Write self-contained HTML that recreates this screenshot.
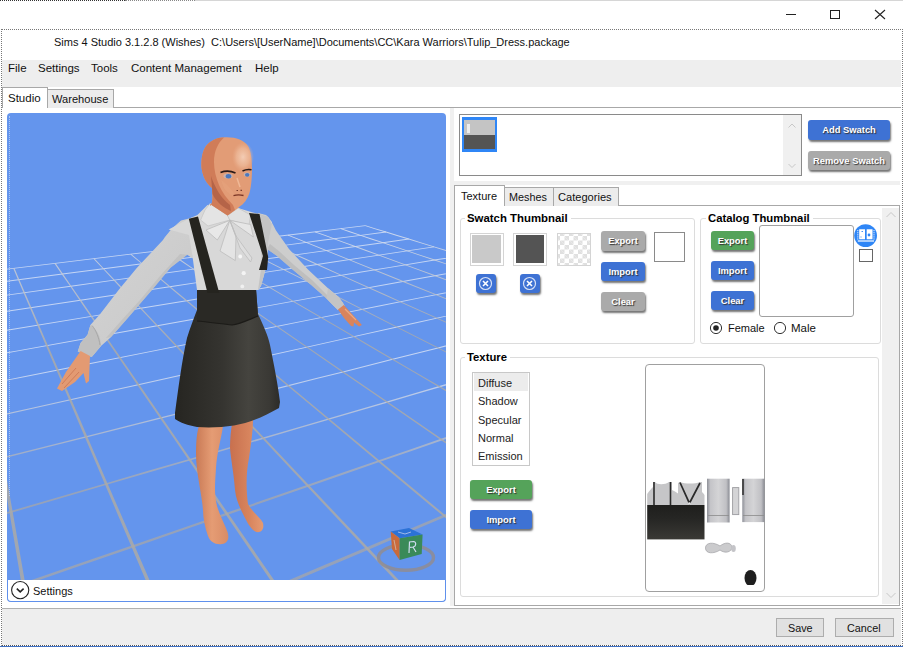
<!DOCTYPE html>
<html><head><meta charset="utf-8">
<style>
*{box-sizing:border-box;margin:0;padding:0}
html,body{width:903px;height:647px;overflow:hidden;background:#fff}
body{position:relative;font-family:"Liberation Sans",sans-serif;font-size:11.5px;color:#000}
.a{position:absolute}
.t{position:absolute;white-space:pre;line-height:1}
.btn3{position:absolute;border-radius:3px;color:#fff;font-weight:bold;text-align:center;font-size:9.4px;text-shadow:1px 1px 1px #333;box-shadow:1px 2px 2px rgba(0,0,0,.55)}
.blue{background:#3e72d4}
.grey{background:#aaaaaa}
.green{background:#55a35a}
</style></head><body>
<!-- top strip -->
<div class="a" style="left:0;top:0;width:125px;height:1px;border-top:1px dotted #333"></div>
<div class="a" style="left:125px;top:0;width:70px;height:1px;border-top:1px dotted #888"></div>
<div class="a" style="left:195px;top:0;width:708px;height:1px;background:#d6d6d6"></div>
<!-- window controls -->
<div class="a" style="left:786px;top:14px;width:10px;height:1px;background:#222"></div>
<div class="a" style="left:830px;top:10px;width:10px;height:9px;border:1px solid #222"></div>
<svg class="a" style="left:874px;top:9px" width="12" height="11"><path d="M1 1L11 10M11 1L1 10" stroke="#222" stroke-width="1.1" fill="none"/></svg>
<!-- outer dotted frame -->
<div class="a" style="left:1px;top:29px;width:902px;height:617px;border:1px dotted #777;border-bottom-color:#555"></div>
<div class="a" style="left:0;top:646px;width:903px;height:1px;background:#3d6fc4"></div>
<!-- title -->
<div class="t" style="left:54px;top:37px;font-size:11px;color:#111">Sims 4 Studio 3.1.2.8 (Wishes)  C:\Users\[UserName]\Documents\CC\Kara Warriors\Tulip_Dress.package</div>
<!-- menu bar -->
<div class="a" style="left:2px;top:60px;width:899px;height:27px;background:#eeeeee"></div>
<div class="t" style="left:8px;top:63px;color:#111">File</div>
<div class="t" style="left:38px;top:63px;color:#111">Settings</div>
<div class="t" style="left:91px;top:63px;color:#111">Tools</div>
<div class="t" style="left:131px;top:63px;color:#111">Content Management</div>
<div class="t" style="left:255px;top:63px;color:#111">Help</div>
<!-- main tabs -->
<div class="a" style="left:2px;top:107px;width:899px;height:1px;background:#a8a8a8"></div>
<div class="a" style="left:47px;top:89px;width:67px;height:19px;background:#ececec;border:1px solid #a8a8a8;border-bottom:none"></div>
<div class="t" style="left:52px;top:94px;color:#111;font-size:11.1px">Warehouse</div>
<div class="a" style="left:2px;top:87px;width:46px;height:21px;background:#fff;border:1px solid #a8a8a8;border-bottom:none"></div>
<div class="t" style="left:8px;top:93px;color:#111">Studio</div>

<!-- viewport -->
<div class="a" style="left:7px;top:113px;width:439px;height:489px;border-radius:4px;background:#6495ed;overflow:hidden">
<svg class="a" style="left:-7px;top:-113px" width="460" height="700">
<defs><linearGradient id="gA0" gradientUnits="userSpaceOnUse" x1="365" y1="226" x2="-53" y2="276"><stop offset="0.00" stop-color="#e4eaf6"/><stop offset="0.20" stop-color="#e4eaf6"/><stop offset="0.40" stop-color="#e4eaf6"/><stop offset="0.60" stop-color="#e4eaf6"/><stop offset="0.80" stop-color="#e4eaf6"/><stop offset="1.00" stop-color="#e4eaf6"/></linearGradient><linearGradient id="gA1" gradientUnits="userSpaceOnUse" x1="386" y1="232" x2="-52" y2="289"><stop offset="0.00" stop-color="#e4eaf6"/><stop offset="0.20" stop-color="#e4eaf6"/><stop offset="0.40" stop-color="#e4eaf6"/><stop offset="0.60" stop-color="#e4eaf6"/><stop offset="0.80" stop-color="#e4eaf6"/><stop offset="1.00" stop-color="#e4eaf6"/></linearGradient><linearGradient id="gA2" gradientUnits="userSpaceOnUse" x1="409" y1="239" x2="-52" y2="303"><stop offset="0.00" stop-color="#e4eaf6"/><stop offset="0.20" stop-color="#e4eaf6"/><stop offset="0.40" stop-color="#e4eaf6"/><stop offset="0.60" stop-color="#e4eaf6"/><stop offset="0.80" stop-color="#e4eaf6"/><stop offset="1.00" stop-color="#e4eaf6"/></linearGradient><linearGradient id="gA3" gradientUnits="userSpaceOnUse" x1="434" y1="247" x2="-51" y2="320"><stop offset="0.00" stop-color="#e4eaf6"/><stop offset="0.20" stop-color="#e4eaf6"/><stop offset="0.40" stop-color="#e4eaf6"/><stop offset="0.60" stop-color="#e4eaf6"/><stop offset="0.80" stop-color="#e4eaf6"/><stop offset="1.00" stop-color="#e4eaf6"/></linearGradient><linearGradient id="gA4" gradientUnits="userSpaceOnUse" x1="462" y1="256" x2="-50" y2="340"><stop offset="0.00" stop-color="#e4eaf6"/><stop offset="0.20" stop-color="#e4eaf6"/><stop offset="0.40" stop-color="#e4eaf6"/><stop offset="0.60" stop-color="#e4eaf6"/><stop offset="0.80" stop-color="#e4eaf6"/><stop offset="1.00" stop-color="#e4eaf6"/></linearGradient><linearGradient id="gA5" gradientUnits="userSpaceOnUse" x1="494" y1="265" x2="-49" y2="363"><stop offset="0.00" stop-color="#e4eaf6"/><stop offset="0.20" stop-color="#e4eaf6"/><stop offset="0.40" stop-color="#e4eaf6"/><stop offset="0.60" stop-color="#e4eaf6"/><stop offset="0.80" stop-color="#e4eaf6"/><stop offset="1.00" stop-color="#e4eaf6"/></linearGradient><linearGradient id="gA6" gradientUnits="userSpaceOnUse" x1="485" y1="285" x2="-48" y2="391"><stop offset="0.00" stop-color="#e4eaf6"/><stop offset="0.20" stop-color="#e4eaf6"/><stop offset="0.40" stop-color="#e4eaf6"/><stop offset="0.60" stop-color="#e4eaf6"/><stop offset="0.80" stop-color="#e4eaf6"/><stop offset="1.00" stop-color="#d8dde7"/></linearGradient><linearGradient id="gA7" gradientUnits="userSpaceOnUse" x1="491" y1="306" x2="-46" y2="426"><stop offset="0.00" stop-color="#e4eaf6"/><stop offset="0.20" stop-color="#e4eaf6"/><stop offset="0.40" stop-color="#e4eaf6"/><stop offset="0.60" stop-color="#e0e5f0"/><stop offset="0.80" stop-color="#d2d6df"/><stop offset="1.00" stop-color="#c5c7ce"/></linearGradient><linearGradient id="gA8" gradientUnits="userSpaceOnUse" x1="499" y1="332" x2="-44" y2="470"><stop offset="0.00" stop-color="#e4eaf6"/><stop offset="0.20" stop-color="#e4eaf6"/><stop offset="0.40" stop-color="#dadfea"/><stop offset="0.60" stop-color="#cbced6"/><stop offset="0.80" stop-color="#bbbdc3"/><stop offset="1.00" stop-color="#acacaf"/></linearGradient><linearGradient id="gA9" gradientUnits="userSpaceOnUse" x1="487" y1="373" x2="-42" y2="527"><stop offset="0.00" stop-color="#e2e8f4"/><stop offset="0.20" stop-color="#d1d5de"/><stop offset="0.40" stop-color="#c0c2c8"/><stop offset="0.60" stop-color="#aeafb2"/><stop offset="0.80" stop-color="#a6a6a8"/><stop offset="1.00" stop-color="#a6a6a8"/></linearGradient><linearGradient id="gA10" gradientUnits="userSpaceOnUse" x1="497" y1="420" x2="-106" y2="629"><stop offset="0.00" stop-color="#c8cbd2"/><stop offset="0.20" stop-color="#b0b1b5"/><stop offset="0.40" stop-color="#a6a6a8"/><stop offset="0.60" stop-color="#a6a6a8"/><stop offset="0.80" stop-color="#a6a6a8"/><stop offset="1.00" stop-color="#a6a6a8"/></linearGradient><linearGradient id="gA11" gradientUnits="userSpaceOnUse" x1="479" y1="501" x2="109" y2="658"><stop offset="0.00" stop-color="#a6a6a8"/><stop offset="0.20" stop-color="#a6a6a8"/><stop offset="0.40" stop-color="#a6a6a8"/><stop offset="0.60" stop-color="#a6a6a8"/><stop offset="0.80" stop-color="#a6a6a8"/><stop offset="1.00" stop-color="#a6a6a8"/></linearGradient><linearGradient id="gA12" gradientUnits="userSpaceOnUse" x1="493" y1="612" x2="401" y2="662"><stop offset="0.00" stop-color="#a6a6a8"/><stop offset="0.20" stop-color="#a6a6a8"/><stop offset="0.40" stop-color="#a6a6a8"/><stop offset="0.60" stop-color="#a6a6a8"/><stop offset="0.80" stop-color="#a6a6a8"/><stop offset="1.00" stop-color="#a6a6a8"/></linearGradient><linearGradient id="gB0" gradientUnits="userSpaceOnUse" x1="365" y1="226" x2="511" y2="271"><stop offset="0.00" stop-color="#dce2ee"/><stop offset="0.20" stop-color="#dce2ee"/><stop offset="0.40" stop-color="#d7dde7"/><stop offset="0.60" stop-color="#d3d7e0"/><stop offset="0.80" stop-color="#ced1d9"/><stop offset="1.00" stop-color="#c9ccd2"/></linearGradient><linearGradient id="gB1" gradientUnits="userSpaceOnUse" x1="341" y1="229" x2="500" y2="282"><stop offset="0.00" stop-color="#dce2ee"/><stop offset="0.20" stop-color="#dadfeb"/><stop offset="0.40" stop-color="#d4d9e2"/><stop offset="0.60" stop-color="#ced2d9"/><stop offset="0.80" stop-color="#c9cbd1"/><stop offset="1.00" stop-color="#c3c5c8"/></linearGradient><linearGradient id="gB2" gradientUnits="userSpaceOnUse" x1="315" y1="232" x2="508" y2="302"><stop offset="0.00" stop-color="#dce2ee"/><stop offset="0.20" stop-color="#d6dbe5"/><stop offset="0.40" stop-color="#cfd2da"/><stop offset="0.60" stop-color="#c7cacf"/><stop offset="0.80" stop-color="#c0c1c3"/><stop offset="1.00" stop-color="#b8b8b8"/></linearGradient><linearGradient id="gB3" gradientUnits="userSpaceOnUse" x1="288" y1="235" x2="518" y2="328"><stop offset="0.00" stop-color="#dce2ee"/><stop offset="0.20" stop-color="#d2d6df"/><stop offset="0.40" stop-color="#c8cbd0"/><stop offset="0.60" stop-color="#bebfc1"/><stop offset="0.80" stop-color="#b4b4b3"/><stop offset="1.00" stop-color="#acaaa6"/></linearGradient><linearGradient id="gB4" gradientUnits="userSpaceOnUse" x1="260" y1="239" x2="504" y2="348"><stop offset="0.00" stop-color="#dae0eb"/><stop offset="0.20" stop-color="#ced2da"/><stop offset="0.40" stop-color="#c3c4c8"/><stop offset="0.60" stop-color="#b7b7b7"/><stop offset="0.80" stop-color="#acaaa6"/><stop offset="1.00" stop-color="#acaaa6"/></linearGradient><linearGradient id="gB5" gradientUnits="userSpaceOnUse" x1="230" y1="242" x2="515" y2="387"><stop offset="0.00" stop-color="#d8dee8"/><stop offset="0.20" stop-color="#c9ccd1"/><stop offset="0.40" stop-color="#b9b9ba"/><stop offset="0.60" stop-color="#acaaa6"/><stop offset="0.80" stop-color="#acaaa6"/><stop offset="1.00" stop-color="#acaaa6"/></linearGradient><linearGradient id="gB6" gradientUnits="userSpaceOnUse" x1="199" y1="246" x2="531" y2="440"><stop offset="0.00" stop-color="#d6dbe5"/><stop offset="0.20" stop-color="#c1c3c6"/><stop offset="0.40" stop-color="#adaba7"/><stop offset="0.60" stop-color="#acaaa6"/><stop offset="0.80" stop-color="#acaaa6"/><stop offset="1.00" stop-color="#acaaa6"/></linearGradient><linearGradient id="gB7" gradientUnits="userSpaceOnUse" x1="166" y1="250" x2="511" y2="487"><stop offset="0.00" stop-color="#d4d9e2"/><stop offset="0.20" stop-color="#bbbbbc"/><stop offset="0.40" stop-color="#acaaa6"/><stop offset="0.60" stop-color="#acaaa6"/><stop offset="0.80" stop-color="#acaaa6"/><stop offset="1.00" stop-color="#acaaa6"/></linearGradient><linearGradient id="gB8" gradientUnits="userSpaceOnUse" x1="131" y1="254" x2="533" y2="590"><stop offset="0.00" stop-color="#d2d6df"/><stop offset="0.20" stop-color="#aeaca9"/><stop offset="0.40" stop-color="#acaaa6"/><stop offset="0.60" stop-color="#acaaa6"/><stop offset="0.80" stop-color="#acaaa6"/><stop offset="1.00" stop-color="#acaaa6"/></linearGradient><linearGradient id="gB9" gradientUnits="userSpaceOnUse" x1="94" y1="259" x2="503" y2="693"><stop offset="0.00" stop-color="#cfd3db"/><stop offset="0.20" stop-color="#acaaa6"/><stop offset="0.40" stop-color="#acaaa6"/><stop offset="0.60" stop-color="#acaaa6"/><stop offset="0.80" stop-color="#acaaa6"/><stop offset="1.00" stop-color="#acaaa6"/></linearGradient><linearGradient id="gB10" gradientUnits="userSpaceOnUse" x1="55" y1="263" x2="348" y2="691"><stop offset="0.00" stop-color="#cdd0d7"/><stop offset="0.20" stop-color="#acaaa6"/><stop offset="0.40" stop-color="#acaaa6"/><stop offset="0.60" stop-color="#acaaa6"/><stop offset="0.80" stop-color="#acaaa6"/><stop offset="1.00" stop-color="#acaaa6"/></linearGradient><linearGradient id="gB11" gradientUnits="userSpaceOnUse" x1="14" y1="268" x2="194" y2="689"><stop offset="0.00" stop-color="#cacdd3"/><stop offset="0.20" stop-color="#acaaa6"/><stop offset="0.40" stop-color="#acaaa6"/><stop offset="0.60" stop-color="#acaaa6"/><stop offset="0.80" stop-color="#acaaa6"/><stop offset="1.00" stop-color="#acaaa6"/></linearGradient><linearGradient id="gB12" gradientUnits="userSpaceOnUse" x1="-30" y1="274" x2="41" y2="687"><stop offset="0.00" stop-color="#c7cacf"/><stop offset="0.20" stop-color="#acaaa6"/><stop offset="0.40" stop-color="#acaaa6"/><stop offset="0.60" stop-color="#acaaa6"/><stop offset="0.80" stop-color="#acaaa6"/><stop offset="1.00" stop-color="#acaaa6"/></linearGradient></defs><polygon fill="url(#gA0)" opacity="0.75" points="365.3,225.2 340.7,228.2 301.6,233.0 273.9,236.3 244.9,239.9 214.3,243.6 165.5,249.5 130.7,253.7 93.9,258.2 55.0,262.9 -7.8,270.5 -52.9,276.0 -52.8,276.9 -7.7,271.4 55.1,263.8 94.0,259.1 130.8,254.6 165.6,250.4 214.4,244.5 245.0,240.8 274.0,237.2 301.7,233.9 340.8,229.1 365.4,226.1"/>
<polygon fill="url(#gA1)" opacity="0.75" points="385.9,231.6 360.6,234.9 320.2,240.1 291.6,243.9 261.4,247.8 229.7,251.9 178.6,258.5 142.1,263.3 103.4,268.3 62.4,273.6 -4.2,282.3 -52.3,288.5 -52.2,289.4 -4.1,283.2 62.5,274.5 103.5,269.2 142.2,264.2 178.7,259.4 229.8,252.8 261.6,248.7 291.7,244.8 320.4,241.0 360.7,235.8 386.1,232.5"/>
<polygon fill="url(#gA2)" opacity="0.75" points="408.7,238.6 382.7,242.3 341.0,248.1 311.3,252.2 280.0,256.6 246.8,261.2 193.4,268.7 155.0,274.0 114.2,279.7 70.7,285.8 -0.2,295.7 -51.7,302.9 -51.6,303.8 -0.1,296.6 70.8,286.7 114.3,280.6 155.1,274.9 193.5,269.6 246.9,262.1 280.1,257.5 311.4,253.1 341.1,249.0 382.8,243.2 408.9,239.5"/>
<polygon fill="url(#gA3)" opacity="0.75" points="434.0,246.4 407.1,250.5 364.1,257.0 333.3,261.6 300.7,266.5 266.1,271.7 210.1,280.2 169.7,286.3 126.5,292.8 80.3,299.8 4.4,311.2 -51.0,319.6 -50.9,320.5 4.6,312.1 80.4,300.7 126.6,293.7 169.8,287.2 210.2,281.1 266.3,272.6 300.8,267.4 333.4,262.5 364.2,257.8 407.3,251.3 434.1,247.3"/>
<polygon fill="url(#gA4)" opacity="0.75" points="462.1,255.1 434.5,259.6 390.0,266.9 358.1,272.1 324.2,277.7 288.0,283.6 229.2,293.3 186.5,300.3 140.7,307.8 91.3,315.9 9.9,329.3 -50.2,339.1 -50.0,340.0 10.0,330.2 91.5,316.8 140.8,308.7 186.6,301.2 229.3,294.2 288.2,284.5 324.3,278.6 358.2,273.0 390.2,267.8 434.6,260.5 462.2,256.0"/>
<polygon fill="url(#gA5)" opacity="0.75" points="493.6,264.8 465.2,269.9 419.3,278.1 386.2,284.1 350.9,290.4 313.1,297.2 251.2,308.4 205.9,316.5 157.1,325.3 104.3,334.8 16.3,350.7 -49.2,362.4 -49.0,363.3 16.4,351.5 104.4,335.7 157.3,326.2 206.1,317.4 251.3,309.3 313.2,298.1 351.0,291.3 386.4,285.0 419.5,279.0 465.4,270.8 493.8,265.6"/>
<polygon fill="url(#gA6)" opacity="0.75" points="484.8,284.5 452.7,290.9 418.4,297.8 381.6,305.1 342.0,313.0 299.3,321.5 253.2,330.6 203.2,340.6 148.7,351.4 89.2,363.3 24.0,376.3 -48.0,390.6 -47.8,391.5 24.1,377.2 89.4,364.2 148.9,352.3 203.3,341.5 253.4,331.5 299.5,322.3 342.2,313.8 381.7,306.0 418.5,298.6 452.9,291.8 484.9,285.4"/>
<polygon fill="url(#gA7)" opacity="0.75" points="491.0,305.6 455.5,313.6 417.2,322.1 396.9,326.6 353.7,336.2 306.9,346.7 255.7,358.1 199.7,370.5 138.1,384.2 105.0,391.6 33.3,407.5 -46.5,425.2 -46.2,426.4 33.6,408.6 105.2,392.6 138.4,385.2 199.9,371.4 255.9,358.9 307.1,347.5 353.9,337.1 397.1,327.5 417.4,323.0 455.7,314.4 491.2,306.5"/>
<polygon fill="url(#gA8)" opacity="0.75" points="498.9,332.0 459.1,342.0 437.8,347.4 392.5,358.8 342.9,371.4 316.2,378.1 258.9,392.5 227.9,400.4 160.9,417.3 85.9,436.2 45.0,446.5 -44.6,469.1 -44.3,470.5 45.4,447.8 86.2,437.5 161.2,418.5 228.2,401.5 259.2,393.7 316.5,379.1 343.1,372.4 392.8,359.8 438.1,348.4 459.3,343.0 499.1,332.9"/>
<polygon fill="url(#gA9)" opacity="0.75" points="486.8,372.2 463.6,379.0 413.7,393.5 386.7,401.4 358.3,409.7 296.6,427.7 263.0,437.4 189.4,458.9 149.1,470.6 106.1,483.2 10.8,511.0 -42.2,526.4 -41.7,528.3 11.3,512.8 106.6,484.8 149.6,472.3 189.9,460.4 263.4,438.9 297.0,429.1 358.7,411.0 387.1,402.7 414.1,394.8 464.0,380.2 487.2,373.4"/>
<polygon fill="url(#gA10)" opacity="0.75" points="496.8,419.5 469.8,428.8 410.9,449.2 378.7,460.3 344.3,472.1 307.7,484.8 226.5,512.8 181.3,528.4 132.6,545.2 80.0,563.3 -39.0,604.4 -106.7,627.7 -105.8,630.4 -38.1,606.9 80.9,565.6 133.4,547.4 182.0,530.5 227.2,514.9 308.3,486.7 345.0,474.0 379.3,462.1 411.5,450.9 470.4,430.5 497.4,421.1"/>
<polygon fill="url(#gA11)" opacity="0.75" points="478.6,500.0 444.0,514.6 406.8,530.3 366.7,547.3 323.3,565.6 276.3,585.5 225.1,607.1 169.2,630.7 107.9,656.6 109.3,659.9 170.6,633.8 226.4,610.0 277.5,588.3 324.5,568.3 367.8,549.9 407.8,532.8 445.0,517.0 479.6,502.3"/>
<polygon fill="url(#gA12)" opacity="0.75" points="491.9,609.8 448.1,633.6 400.0,659.8 402.1,663.7 450.1,637.3 493.8,613.2"/>
<polygon fill="url(#gB0)" opacity="0.85" points="365.2,226.1 375.3,229.2 385.9,232.5 397.0,235.9 408.7,239.5 421.0,243.3 433.9,247.3 447.6,251.5 462.0,255.9 477.3,260.6 493.5,265.6 510.8,270.9 511.0,270.1 493.8,264.8 477.6,259.8 462.3,255.1 447.9,250.6 434.2,246.4 421.2,242.4 408.9,238.6 397.2,235.1 386.1,231.6 375.5,228.4 365.4,225.3"/>
<polygon fill="url(#gB1)" opacity="0.85" points="340.6,229.1 350.3,232.4 360.5,235.8 371.3,239.4 382.6,243.1 394.5,247.1 420.4,255.8 434.4,260.5 449.3,265.4 465.2,270.7 482.0,276.4 500.0,282.4 500.3,281.5 482.3,275.5 465.4,269.9 449.6,264.6 434.7,259.6 420.6,254.9 394.8,246.3 382.9,242.3 371.6,238.5 360.8,234.9 350.6,231.5 340.9,228.3"/>
<polygon fill="url(#gB2)" opacity="0.85" points="314.8,232.2 324.1,235.6 344.3,243.0 355.1,247.0 366.6,251.2 378.7,255.6 405.2,265.3 419.6,270.5 435.0,276.2 451.4,282.1 487.7,295.4 507.8,302.8 508.1,301.9 488.0,294.6 451.7,281.3 435.3,275.3 419.9,269.7 405.5,264.4 379.0,254.7 366.9,250.3 355.4,246.1 344.6,242.2 324.4,234.8 315.1,231.4"/>
<polygon fill="url(#gB3)" opacity="0.85" points="287.8,235.5 296.7,239.1 315.8,246.8 326.2,251.0 348.8,260.1 361.1,265.1 388.1,275.9 402.9,281.9 435.7,295.1 453.9,302.5 494.7,318.9 517.6,328.1 517.9,327.3 495.0,318.1 454.3,301.6 436.1,294.3 403.3,281.1 388.4,275.1 361.5,264.2 349.1,259.3 326.6,250.2 316.2,246.0 297.0,238.2 288.1,234.7"/>
<polygon fill="url(#gB4)" opacity="0.85" points="259.4,238.9 276.6,246.7 285.9,250.8 306.1,259.9 317.1,264.9 341.3,275.7 354.5,281.7 383.9,294.9 400.2,302.2 436.6,318.6 457.1,327.8 503.5,348.7 503.9,347.8 457.5,327.0 437.0,317.8 400.6,301.4 384.3,294.1 354.9,280.9 341.6,274.9 317.5,264.1 306.5,259.1 286.3,250.0 277.0,245.8 259.8,238.1"/>
<polygon fill="url(#gB5)" opacity="0.85" points="229.6,242.5 245.6,250.7 254.3,255.1 273.2,264.7 294.5,275.5 318.8,287.8 332.2,294.6 362.0,309.8 396.8,327.5 437.8,348.3 461.1,360.2 515.1,387.6 515.6,386.7 461.5,359.3 438.2,347.5 397.2,326.7 362.4,309.0 332.6,293.8 319.2,287.0 294.9,274.7 273.6,263.9 254.7,254.3 246.0,249.9 230.0,241.7"/>
<polygon fill="url(#gB6)" opacity="0.85" points="198.3,246.3 212.9,254.9 229.4,264.5 247.9,275.3 268.9,287.6 293.0,301.7 306.4,309.5 336.6,327.1 372.1,347.9 414.6,372.8 466.4,403.1 530.8,440.8 531.5,439.7 467.0,402.1 415.2,371.9 372.6,347.1 337.1,326.3 306.9,308.7 293.5,300.9 269.4,286.8 248.3,274.5 229.8,263.7 213.4,254.1 198.7,245.6"/>
<polygon fill="url(#gB7)" opacity="0.85" points="165.3,250.3 178.4,259.4 193.2,269.5 209.9,281.0 229.0,294.1 251.0,309.2 276.5,326.8 306.6,347.6 342.7,372.4 386.5,402.6 441.1,440.2 510.8,488.2 511.8,486.8 441.9,438.9 387.3,401.5 343.4,371.4 307.3,346.7 277.1,326.0 251.5,308.4 229.5,293.4 210.4,280.3 193.7,268.8 178.9,258.6 165.8,249.6"/>
<polygon fill="url(#gB8)" opacity="0.85" points="130.4,254.5 141.9,264.1 154.8,274.8 177.5,293.9 195.6,309.0 216.6,326.5 241.3,347.2 270.9,371.9 306.9,402.1 378.4,461.9 443.8,516.6 532.2,590.5 533.7,588.7 445.1,515.0 379.5,460.5 307.9,400.9 271.8,370.9 242.1,346.2 217.3,325.6 196.3,308.1 178.2,293.1 155.4,274.1 142.5,263.4 131.0,253.8"/>
<polygon fill="url(#gB9)" opacity="0.85" points="93.6,259.0 103.1,269.1 119.8,286.9 133.0,300.9 148.2,317.1 166.0,336.1 199.3,371.5 227.4,401.5 262.5,438.8 307.2,486.5 403.6,589.2 501.8,693.9 504.3,691.5 405.6,587.3 308.8,485.0 263.9,437.5 228.7,400.3 200.4,370.4 167.0,335.1 149.1,316.2 133.8,300.1 120.6,286.1 103.8,268.4 94.3,258.3"/>
<polygon fill="url(#gB10)" opacity="0.85" points="54.6,263.7 61.9,274.4 70.3,286.6 85.1,308.4 97.0,325.8 111.0,346.4 127.8,371.0 148.2,400.9 173.6,438.1 225.7,514.6 275.6,587.8 346.6,691.8 349.7,689.7 278.2,586.0 227.9,513.1 175.4,436.9 149.8,399.8 129.3,370.0 112.4,345.5 98.2,325.0 86.2,307.6 71.3,285.9 62.9,273.8 55.5,263.1"/>
<polygon fill="url(#gB11)" opacity="0.85" points="13.3,268.6 18.1,280.0 23.6,293.0 30.0,308.0 37.4,325.4 46.1,345.9 62.6,384.6 76.6,417.7 94.4,459.4 117.3,513.4 148.3,586.2 192.2,689.6 196.1,688.0 151.5,584.8 120.0,512.3 96.7,458.4 78.8,416.8 64.5,383.8 47.8,345.2 38.9,324.8 31.4,307.4 24.9,292.5 19.3,279.5 14.4,268.1"/>
<polygon fill="url(#gB12)" opacity="0.85" points="-30.6,273.8 -28.6,285.9 -26.2,299.8 -23.5,315.9 -20.4,334.7 -16.6,357.0 -12.1,383.9 -6.6,416.9 0.4,458.4 9.4,512.1 21.6,584.5 38.9,687.2 43.3,686.5 25.3,583.9 12.6,511.6 3.1,457.9 -4.1,416.5 -9.9,383.5 -14.6,356.7 -18.6,334.4 -21.9,315.6 -24.7,299.6 -27.1,285.7 -29.3,273.6"/>
<defs>
<radialGradient id="hl"><stop offset="0" stop-color="#f4cfb8" stop-opacity=".95"/><stop offset="0.6" stop-color="#f0c0a2" stop-opacity=".6"/><stop offset="1" stop-color="#e9ad8c" stop-opacity="0"/></radialGradient>
<radialGradient id="hg" cx="238" cy="150" r="26" gradientUnits="userSpaceOnUse"><stop offset="0" stop-color="#f0c2a6"/><stop offset="0.6" stop-color="#e9a887"/><stop offset="1" stop-color="#e19a76"/></radialGradient>
<linearGradient id="sk" x1="175" y1="0" x2="280" y2="0" gradientUnits="userSpaceOnUse"><stop offset="0" stop-color="#262521"/><stop offset="0.45" stop-color="#353430"/><stop offset="0.7" stop-color="#45443f"/><stop offset="0.9" stop-color="#3a3935"/><stop offset="1" stop-color="#2c2b28"/></linearGradient>
<linearGradient id="lg1" x1="196" y1="0" x2="228" y2="0" gradientUnits="userSpaceOnUse"><stop offset="0" stop-color="#c97a56"/><stop offset="0.5" stop-color="#e59c74"/><stop offset="1" stop-color="#d98c66"/></linearGradient>
<linearGradient id="lg2" x1="230" y1="0" x2="263" y2="0" gradientUnits="userSpaceOnUse"><stop offset="0" stop-color="#c8704e"/><stop offset="0.6" stop-color="#d8855e"/><stop offset="1" stop-color="#e59a72"/></linearGradient>
<linearGradient id="arm1" x1="0" y1="0" x2="1" y2="1"><stop offset="0" stop-color="#d4d4d4"/><stop offset="1" stop-color="#c8c8c8"/></linearGradient>
</defs>
<g id="char">
<!-- left arm sleeve -->
<path d="M192 217.8 L181 220.6 C172 228 168 233 163 240 L137 267.8 L118.6 290 L100 314.2 L90.4 324.9 L87.6 334.7 L80.6 343 L77.8 351.4 L91.7 357 L101 346 L111.1 337 L127.8 318 L151.9 290 L170.5 267.8 L187.2 254.8 L192.8 258.6 Z" fill="url(#arm1)"/>
<path d="M111.1 337 L127.8 318 L151.9 290 L170.5 267.8 L187.2 254.8 L180 254 L160 276 L140 300 L120 322 L106 338 Z" fill="#bababa" opacity=".6"/>
<path d="M90.4 324.9 C96 328 101 336 101 346 L91.7 357 L77.8 351.4 L80.6 343 L87.6 334.7 Z" fill="#c0c0c0"/>
<path d="M92 325.5 C96 330 99 338 100 345" stroke="#a8a8a8" stroke-width="1" fill="none"/>
<!-- right arm sleeve -->
<path d="M258 213 L266 215 C269 217 272 222 276 230.5 L289 249 L308 269.6 L328 288.3 L338.4 296.8 L343 303 L344.5 306 L338 310 L333 305.3 L326.5 298.5 L311.2 284.9 L292.5 269.6 L277 256 L267 249 Z" fill="#cdcdcd"/>
<path d="M267 249 L277 256 L292.5 269.6 L311.2 284.9 L326.5 298.5 L333 305.3 L330 298 L312 280 L294 265 L280 252 L270 244 Z" fill="#b4b4b4" opacity=".6"/>
<path d="M328 288.3 L338.4 296.8 L343 303 L344.5 306 L338 310 L333 305.3 L326.5 298.5 Z" fill="#c4c4c4"/>
<!-- legs -->
<path d="M199 426 L223 426 C221 440 217 452 216 468 C215 484 214 494 217 506 C220 516 225 525 227.5 532 C229.5 538 228 543 222 544 C216 545 210 542 208 536 C205 528 203 518 203 510 C202 495 196 472 196 454 C196 440 197 432 199 426 Z" fill="url(#lg1)"/>
<path d="M232 424 L253 419 C253 430 251 445 249 458 C246 472 246 490 248 504 C252 512 260 517 263 523 C264.5 529 261 533 256.5 532 C251 530 247 522 244 516 C240 508 236 500 235 490 C234 475 231 460 230 448 C230 438 231 430 232 424 Z" fill="url(#lg2)"/>
<!-- skirt -->
<path d="M197 289 L256 289 L258 314 C263 325 268 335 270 345 C274 365 278 385 280 402 L279 408 C265 416 250 423 234 425.5 C222 427.5 208 428 197 427 C188 425.5 180 422.5 175 419 L175 413 C178 390 182 360 187 338 C190 328 194 318 197 310 Z" fill="url(#sk)"/>
<path d="M197 289 L256 289 L258 316 C248 320 240 324 232 325 C222 324 208 322 197 321 Z" fill="#2a2925"/>
<path d="M197 321 C208 322 222 324 232 325 C240 324 248 320 258 316" stroke="#1c1b18" stroke-width="1.2" fill="none"/>
<!-- torso shirt -->
<path d="M207.5 205 L238 208 L252 212.3 L263.6 215.1 L272 222 L268 244 L267 264 L261 286 L258 290 L197 290 L192.8 258.6 L189 235 L168.6 229.5 L188.8 218.7 L197.4 215.1 Z" fill="#d8d8d8"/>
<path d="M258 213 L268 217 L272 224 L268 244 L267 264 L261 286 L258 290 L262 262 Z" fill="#c4c4c4"/>
<path d="M210 203.5 L227.6 215.5 L229.8 220 L208 226 L200.6 220 L205 210 Z" fill="#e4e4e4" stroke="#c4c4c4" stroke-width=".7"/>
<path d="M238 208 L227.6 215.5 L229.8 220 L249 225 L250.6 215 Z" fill="#e0e0e0" stroke="#c4c4c4" stroke-width=".7"/>
<!-- bow -->
<path d="M229.8 220.3 L206 230 L217.3 240 Z" fill="#e8e8e8" stroke="#bdbdbd" stroke-width=".8"/>
<path d="M229.8 220.3 L250.6 224.5 L253.4 237 Z" fill="#e6e6e6" stroke="#bdbdbd" stroke-width=".8"/>
<path d="M229.8 220.3 L220 251 L235.3 260.6 L236 236 Z" fill="#e4e4e4" stroke="#bcbcbc" stroke-width=".8"/>
<path d="M229.8 220.3 L236 236 L252 258 L250.6 262 L240 248 Z" fill="#dedede" stroke="#bcbcbc" stroke-width=".8"/>
<circle cx="240.2" cy="256.5" r="1.9" fill="#f6f6f6"/><circle cx="243.7" cy="273.2" r="2.1" fill="#f4f4f4"/><circle cx="242.3" cy="286.4" r="1.9" fill="#f0f0f0"/>
<!-- suspenders -->
<path d="M188.8 218.7 L198 216.5 L219.3 293 L207.5 293 Z" fill="#25241f"/>
<path d="M249 213 L259.5 214 L268.2 257 L267 270 L259 270 L263 256 Z" fill="#25241f"/>
<!-- neck & head -->
<path d="M226 137.2 C236 137 244 140 248 146 C251 151 252 160 252 168 C252 176 251.5 186 249.5 193 C247.5 199 244 204 239 207 L237.5 208.5 L227.6 215.5 L210 204 L210.6 206 C212.5 202 213 200 212 188 C207 184 203 178 201.5 168 C201 160 202 152 206 146 C211 140 218 137 226 137.2 Z" fill="#e29c76"/>
<path d="M206 146 C211 140 218 137 224 137.5 C218 143 214 151 214 162 C214 170 216 178 219 185 C222 192 227 199 233 205 L235 210 L227.6 215.5 L210 204 L210.6 206 C212.5 202 213 200 212 188 C207 184 203 178 201.5 168 C201 160 202 152 206 146 Z" fill="#d07c58"/>
<ellipse cx="243" cy="157" rx="11" ry="15" fill="url(#hl)"/>
<path d="M211 176 C215 188 221 198 230 205 L231 211 C224 208 216 202 212.5 194 Z" fill="#b06045" opacity=".85"/>
<path d="M221 180 C226 183 232 190 236 196 C232 197 228 193 224 188 Z" fill="#e6a27c" opacity=".7"/>
<ellipse cx="228" cy="176" rx="4.6" ry="2.5" fill="#c7b2ae"/>
<ellipse cx="228.5" cy="176.3" rx="2.8" ry="2.2" fill="#4c78bc"/>
<ellipse cx="247" cy="174.6" rx="3.2" ry="2.1" fill="#c7b2ae"/>
<ellipse cx="247.2" cy="174.8" rx="2.2" ry="1.9" fill="#4c78bc"/>
<path d="M220.5 172.5 Q228 169.5 235.5 173" stroke="#2a1a18" stroke-width="1.6" fill="none"/>
<path d="M242.5 171 Q247 168.8 251.5 169.8" stroke="#2a1a18" stroke-width="1.5" fill="none"/>
<path d="M237 178 L240 187" stroke="#f0b896" stroke-width="1.5"/>
<path d="M236.5 190.5 L238 190.5 M240.5 190.3 L242 190.3" stroke="#7a3e2e" stroke-width="1.2"/>
<path d="M233.5 195.7 Q238 194 243.5 195.5" stroke="#7a3525" stroke-width="1.3" fill="none"/>
<!-- hands -->
<path d="M80.6 351 L90 356 L89.5 368 L89 381 L86 383.5 L83.5 373 L75 382 L62 391 L57 388.5 L66 372 Z" fill="#e39a72"/><path d="M62 384 L76 368 M64 388 L79 372" stroke="#c8714f" stroke-width="1" opacity=".7"/>
<path d="M338 309.5 L343.8 305 L352 314 L361.9 325 L359 326.5 L354 322.5 L353.5 326.5 L351 326 L344 318 Z" fill="#d9845e"/><path d="M345 309 L356 320" stroke="#eaa882" stroke-width="1.3"/>
<!-- gizmo -->
<ellipse cx="406" cy="557.5" rx="27.5" ry="12.8" fill="none" stroke="#8f8c92" stroke-width="3.4" opacity=".85"/>
<path d="M390.7 531.5 L409 528 L422.6 534.4 L399.6 538.3 Z" fill="#2c72d6"/>
<path d="M390.7 531.5 L399.6 538.3 L399.6 560 L392 549 Z" fill="#c96a3c"/>
<path d="M399.6 538.3 L422.6 534.4 L421.7 554 L399.6 560 Z" fill="#3a8a58"/>
<path d="M398 532 L405 534 L411 532" stroke="#9fb8e8" stroke-width="1" fill="none"/>
<path d="M409 553 L409.5 542 L413.5 541.5 C416.5 541.5 416.5 546.5 413 547 L410 547.3 M413 547 L416 552" stroke="#d0dcef" stroke-width="1.2" fill="none"/>
<path d="M394 540 L396 550" stroke="#d0a890" stroke-width="1.1"/>
</g>

</svg>
<div class="a" style="left:2px;top:3px;width:0;height:380px;border-left:1px dotted rgba(255,255,255,.45)"></div>
<div class="a" style="left:0;top:467px;width:439px;height:22px;background:#fff;border:1.5px solid #5f90ec;border-top:none;border-radius:0 0 4px 4px"></div>
</div>
<svg class="a" style="left:10px;top:580px" width="22" height="22"><circle cx="10.2" cy="10.1" r="8.6" fill="#fff" stroke="#222" stroke-width="1.1"/><path d="M6.8 8.6L10.2 11.8L13.6 8.6" stroke="#222" stroke-width="1.6" fill="none"/></svg>
<div class="t" style="left:33px;top:586px;font-size:11px;color:#111">Settings</div>

<!-- splitter -->
<div class="a" style="left:450px;top:108px;width:4px;height:498px;background:#f0f0f0"></div>

<!-- swatch list -->
<div class="a" style="left:459px;top:114px;width:343px;height:62px;border:1px solid #8a8a8a;background:#fff"></div>
<div class="a" style="left:783px;top:115px;width:18px;height:60px;background:#f0f0f0"></div>
<svg class="a" style="left:786px;top:122px" width="12" height="8"><path d="M2.5 5.5L6 2L9.5 5.5" stroke="#c8c8c8" fill="none"/></svg>
<svg class="a" style="left:786px;top:162px" width="12" height="8"><path d="M2.5 2L6 5.5L9.5 2" stroke="#c8c8c8" fill="none"/></svg>
<div class="a" style="left:462px;top:117px;width:35px;height:35px;background:#2f86f6"></div>
<div class="a" style="left:464px;top:120px;width:31px;height:15px;background:#c4c4c4"></div>
<div class="a" style="left:464px;top:135px;width:31px;height:14px;background:#545454"></div>
<div class="a" style="left:467px;top:124px;width:3px;height:9px;background:#eee"></div>

<div class="btn3 blue" style="left:808px;top:120px;width:82px;height:20px;line-height:20px">Add Swatch</div>
<div class="btn3 grey" style="left:808px;top:151px;width:82px;height:19px;line-height:19px">Remove Swatch</div>

<div class="a" style="left:454px;top:181px;width:446px;height:4px;background:#f0f0f0"></div>

<!-- inner tabs -->
<div class="a" style="left:454px;top:205px;width:446px;height:401px;border:1px solid #a8a8a8;background:#fff"></div>
<div class="a" style="left:504px;top:187px;width:50px;height:19px;background:#ececec;border:1px solid #a8a8a8;border-bottom:none"></div>
<div class="t" style="left:509px;top:192px;color:#111;font-size:10.8px">Meshes</div>
<div class="a" style="left:553px;top:187px;width:66px;height:19px;background:#ececec;border:1px solid #a8a8a8;border-bottom:none"></div>
<div class="t" style="left:558px;top:192px;color:#111;font-size:11.1px">Categories</div>
<div class="a" style="left:454px;top:185px;width:51px;height:21px;background:#fff;border:1px solid #a8a8a8;border-bottom:none"></div>
<div class="t" style="left:461px;top:191px;color:#111;font-size:11px">Texture</div>

<!-- scrollbar -->
<div class="a" style="left:882px;top:208px;width:17px;height:396px;background:#f0f0f0"></div>
<svg class="a" style="left:885px;top:211px" width="12" height="8"><path d="M1.5 6L6 1.5L10.5 6" stroke="#c8c8c8" fill="none"/></svg>
<svg class="a" style="left:885px;top:591px" width="12" height="8"><path d="M1.5 2L6 6.5L10.5 2" stroke="#c8c8c8" fill="none"/></svg>

<!-- swatch thumbnail group -->
<div class="a" style="left:460px;top:218px;width:235px;height:126px;border:1px solid #dcdcdc;border-radius:3px"></div>
<div class="t" style="left:465px;top:213px;font-weight:bold;background:#fff;padding:0 3px 0 2px;font-size:11.4px">Swatch Thumbnail</div>
<div class="a" style="left:470px;top:233px;width:34px;height:33px;border:1px solid #d4d4d4;background:#fff"></div>
<div class="a" style="left:472px;top:235px;width:29px;height:28px;background:#c9c9c9"></div>
<div class="a" style="left:513px;top:233px;width:34px;height:33px;border:1px solid #d4d4d4;background:#fff"></div>
<div class="a" style="left:516px;top:235px;width:28px;height:28px;background:#545454"></div>
<div class="a" style="left:557px;top:233px;width:34px;height:33px;border:1px solid #d4d4d4;background-color:#fff;background-image:linear-gradient(45deg,#e0e0e0 25%,transparent 25%,transparent 75%,#e0e0e0 75%),linear-gradient(45deg,#e0e0e0 25%,transparent 25%,transparent 75%,#e0e0e0 75%);background-size:9px 9px;background-position:2px 2px,6.5px 6.5px"></div>
<div class="btn3 blue" style="left:476px;top:274px;width:20px;height:19px"><svg width="20" height="19" style="position:absolute;left:0;top:0"><circle cx="9.5" cy="9.5" r="6" fill="none" stroke="#d8e2f6" stroke-width="1.2"/><path d="M7 7L12 12M12 7L7 12" stroke="#fff" stroke-width="1.6"/></svg></div>
<div class="btn3 blue" style="left:520px;top:274px;width:20px;height:19px"><svg width="20" height="19" style="position:absolute;left:0;top:0"><circle cx="9.5" cy="9.5" r="6" fill="none" stroke="#d8e2f6" stroke-width="1.2"/><path d="M7 7L12 12M12 7L7 12" stroke="#fff" stroke-width="1.6"/></svg></div>
<div class="btn3 grey" style="left:601px;top:231px;width:44px;height:20px;line-height:20px">Export</div>
<div class="btn3 blue" style="left:601px;top:262px;width:44px;height:19px;line-height:19px">Import</div>
<div class="btn3 grey" style="left:601px;top:292px;width:44px;height:19px;line-height:19px">Clear</div>
<div class="a" style="left:654px;top:232px;width:31px;height:30px;border:1px solid #8a8a8a;background:#fff"></div>

<!-- catalog thumbnail group -->
<div class="a" style="left:700px;top:218px;width:181px;height:126px;border:1px solid #dcdcdc;border-radius:3px"></div>
<div class="t" style="left:706px;top:213px;font-weight:bold;background:#fff;padding:0 3px 0 2px;font-size:11.3px">Catalog Thumbnail</div>
<div class="btn3 green" style="left:711px;top:231px;width:43px;height:19px;line-height:19px">Export</div>
<div class="btn3 blue" style="left:711px;top:261px;width:43px;height:19px;line-height:19px">Import</div>
<div class="btn3 blue" style="left:711px;top:291px;width:43px;height:19px;line-height:19px">Clear</div>
<div class="a" style="left:759px;top:225px;width:95px;height:92px;border:1px solid #a0a0a0;border-radius:3px;background:#fff"></div>
<svg class="a" style="left:854px;top:224px" width="24" height="24"><circle cx="11.6" cy="11.6" r="11.4" fill="#2f86f6"/><path d="M5.2 5.2h5.8v10H5.2zM12.7 5.2h5.8v10h-5.8z" fill="#fff"/><path d="M3.8 6v10M20 6v10" stroke="#fff" stroke-width=".9" stroke-dasharray="1.2 .9"/><path d="M3.8 17h16.2" stroke="#fff" stroke-width="1.2"/><circle cx="15" cy="11" r="1.4" fill="#2f86f6"/><path d="M7.5 7.5h1.5M6.5 13h1" stroke="#2f86f6" stroke-width=".9"/></svg>
<div class="a" style="left:859px;top:249px;width:14px;height:13px;border:1px solid #666;background:#fff"></div>
<svg class="a" style="left:709px;top:321px" width="14" height="14"><circle cx="7" cy="7" r="5.6" fill="#fff" stroke="#333" stroke-width="1"/><circle cx="7" cy="7" r="2.8" fill="#222"/></svg>
<div class="t" style="left:728px;top:323px;color:#111;font-size:11px">Female</div>
<svg class="a" style="left:773px;top:321px" width="14" height="14"><circle cx="7" cy="7" r="5.6" fill="#fff" stroke="#333" stroke-width="1"/></svg>
<div class="t" style="left:791px;top:323px;color:#111">Male</div>

<!-- texture group -->
<div class="a" style="left:460px;top:357px;width:419px;height:240px;border:1px solid #dcdcdc;border-radius:3px"></div>
<div class="t" style="left:465px;top:352px;font-weight:bold;background:#fff;padding:0 3px 0 2px;font-size:11.3px">Texture</div>
<div class="a" style="left:472px;top:372px;width:58px;height:94px;border:1px solid #c8c8c8;background:#fff"></div>
<div class="a" style="left:474px;top:373px;width:54px;height:18px;background:#ececec"></div>
<div class="t" style="left:478px;top:378px;color:#222;font-size:11px">Diffuse</div>
<div class="t" style="left:478px;top:396px;color:#222;font-size:11px">Shadow</div>
<div class="t" style="left:478px;top:415px;color:#222;font-size:11px">Specular</div>
<div class="t" style="left:478px;top:433px;color:#222;font-size:11px">Normal</div>
<div class="t" style="left:478px;top:451px;color:#222;font-size:11px">Emission</div>
<div class="btn3 green" style="left:470px;top:480px;width:62px;height:19px;line-height:19px">Export</div>
<div class="btn3 blue" style="left:470px;top:510px;width:62px;height:19px;line-height:19px">Import</div>
<div class="a" style="left:645px;top:364px;width:120px;height:228px;border:1px solid #a0a0a0;border-radius:4px;background:#fff"></div>
<svg class="a" style="left:645px;top:470px" width="121" height="115">
<defs><linearGradient id="slv" x1="0" y1="0" x2="1" y2="0"><stop offset="0" stop-color="#8e9098"/><stop offset="0.15" stop-color="#c4c4c8"/><stop offset="0.5" stop-color="#d4d4d6"/><stop offset="0.85" stop-color="#c0c0c4"/><stop offset="1" stop-color="#8a8c94"/></linearGradient>
<linearGradient id="skb" x1="0" y1="0" x2="0" y2="1"><stop offset="0" stop-color="#1f1f1d"/><stop offset="0.4" stop-color="#262624"/><stop offset="1" stop-color="#3a3935"/></linearGradient></defs>
<path d="M2.2 24 C4 21 6 19 8 17 L8 12 L10 12 C12 15 20 15 24 12 L27 12 L27 20 C29 21 31 22 33 23.5 L33 13 L35 12 C40 14 50 14 55 12 L57 12 L57 22 C58 23 59 24 59.5 25 L59.5 35 L2.2 35 Z" fill="#c6c6c8"/>
<path d="M9 12 L9 35 M25.5 12 L25.5 35" stroke="#2a2a2a" stroke-width="1.6"/>
<path d="M35 12.5 L44.4 33.2 L55 13" stroke="#2a2a2a" stroke-width="1.7" fill="none"/>
<circle cx="44.4" cy="33.5" r="1.2" fill="#e8e8e8"/>
<rect x="2.2" y="35" width="57.3" height="34.4" fill="url(#skb)"/>
<rect x="62" y="8.7" width="22.6" height="43.8" fill="url(#slv)"/>
<path d="M63 45.5 H84" stroke="#8a8a8a" stroke-width="0.8"/>
<rect x="87.6" y="17.6" width="6.2" height="27" fill="#d4d4d6" stroke="#9c9ca0" stroke-width="0.9"/>
<rect x="97.3" y="8.7" width="22.2" height="43.4" fill="url(#slv)"/>
<path d="M98 9 V25" stroke="#333" stroke-width="1.6"/>
<path d="M98 45.5 H119" stroke="#8a8a8a" stroke-width="0.8"/>
<path d="M60.5 78 C60.5 72 69 72 75 76 C80 72 86 72 87 77 C87 82 80 84 75 80 C69 84 60.5 84 60.5 78Z" fill="#cbcbcd" stroke="#a8a8ac" stroke-width="0.8"/>
<ellipse cx="88.5" cy="78.5" rx="2.3" ry="3.6" fill="#c4c4c8"/>
<ellipse cx="105.5" cy="108" rx="6" ry="8" fill="#1e1e1e"/>
</svg>


<!-- bottom bar -->
<div class="a" style="left:2px;top:608px;width:899px;height:37px;background:#eeeeee;border-top:1px solid #b0b0b0"></div>
<div class="a" style="left:776px;top:618px;width:48px;height:19px;background:#e1e1e1;border:1px solid #adadad"></div>
<div class="t" style="left:788px;top:623px;color:#111;font-size:10.8px">Save</div>
<div class="a" style="left:835px;top:618px;width:59px;height:19px;background:#e1e1e1;border:1px solid #adadad"></div>
<div class="t" style="left:847px;top:623px;color:#111;font-size:10.8px">Cancel</div>
</body></html>
